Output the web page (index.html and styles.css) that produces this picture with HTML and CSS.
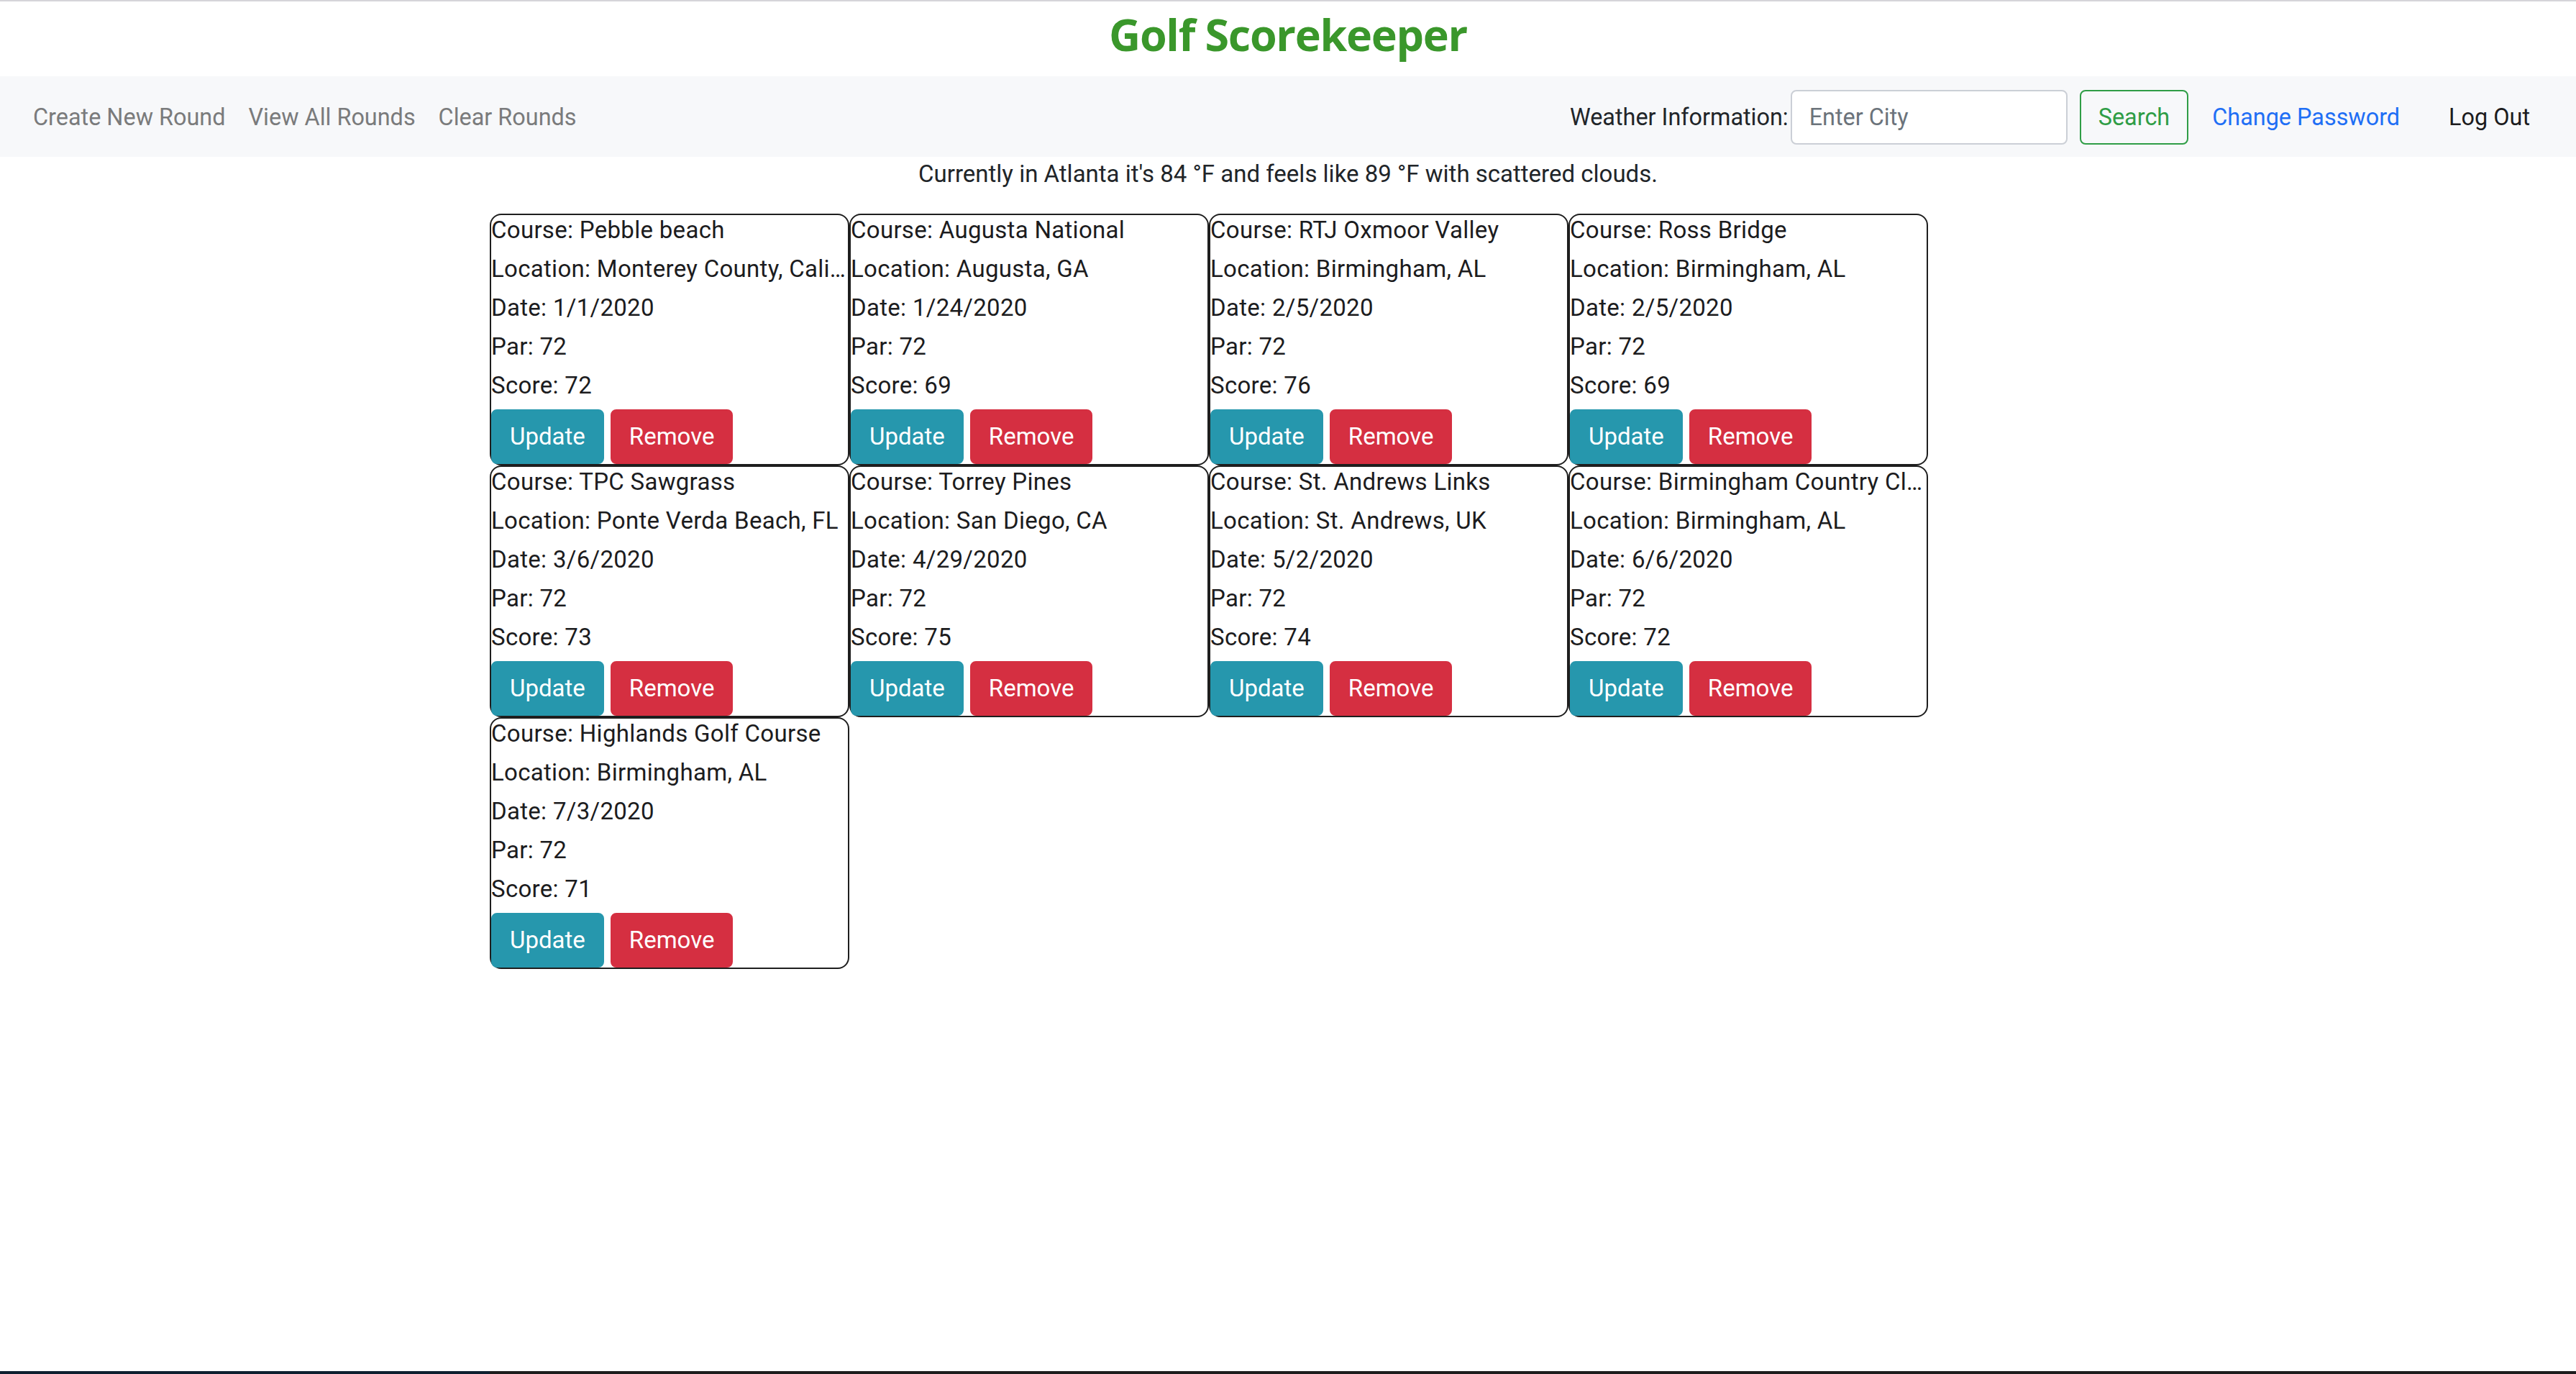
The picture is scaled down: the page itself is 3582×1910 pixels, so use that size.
FILE: index.html
```html
<!DOCTYPE html>
<html lang="en">
<head>
<meta charset="utf-8">
<title>Golf Scorekeeper</title>
<link rel="stylesheet" href="styles.css">
</head>
<body>
<div class="top-edge"></div>
<h2 class="title">Golf Scorekeeper</h2>
<nav class="navbar">
  <div class="nav-left">
    <a class="nav-link" href="#">Create New Round</a>
    <a class="nav-link" href="#">View All Rounds</a>
    <a class="nav-link" href="#">Clear Rounds</a>
  </div>
  <div class="nav-right">
    <form class="weather-form">
      <label class="weather-label">Weather Information:</label>
      <input class="city-input" type="text" placeholder="Enter City">
      <button class="btn btn-search" type="button">Search</button>
    </form>
    <a class="nav-link link-blue" href="#">Change Password</a>
    <a class="nav-link link-dark logout" href="#">Log Out</a>
  </div>
</nav>
<p class="weather">Currently in Atlanta it's 84 °F and feels like 89 °F with scattered clouds.</p>
<main class="rounds">
  <div class="card">
    <div class="line">Course: Pebble beach</div>
    <div class="line">Location: Monterey County, California</div>
    <div class="line">Date: 1/1/2020</div>
    <div class="line">Par: 72</div>
    <div class="line">Score: 72</div>
    <div class="actions"><button class="btn btn-update">Update</button><button class="btn btn-remove">Remove</button></div>
  </div>
  <div class="card">
    <div class="line">Course: Augusta National</div>
    <div class="line">Location: Augusta, GA</div>
    <div class="line">Date: 1/24/2020</div>
    <div class="line">Par: 72</div>
    <div class="line">Score: 69</div>
    <div class="actions"><button class="btn btn-update">Update</button><button class="btn btn-remove">Remove</button></div>
  </div>
  <div class="card">
    <div class="line">Course: RTJ Oxmoor Valley</div>
    <div class="line">Location: Birmingham, AL</div>
    <div class="line">Date: 2/5/2020</div>
    <div class="line">Par: 72</div>
    <div class="line">Score: 76</div>
    <div class="actions"><button class="btn btn-update">Update</button><button class="btn btn-remove">Remove</button></div>
  </div>
  <div class="card">
    <div class="line">Course: Ross Bridge</div>
    <div class="line">Location: Birmingham, AL</div>
    <div class="line">Date: 2/5/2020</div>
    <div class="line">Par: 72</div>
    <div class="line">Score: 69</div>
    <div class="actions"><button class="btn btn-update">Update</button><button class="btn btn-remove">Remove</button></div>
  </div>
  <div class="card">
    <div class="line">Course: TPC Sawgrass</div>
    <div class="line">Location: Ponte Verda Beach, FL</div>
    <div class="line">Date: 3/6/2020</div>
    <div class="line">Par: 72</div>
    <div class="line">Score: 73</div>
    <div class="actions"><button class="btn btn-update">Update</button><button class="btn btn-remove">Remove</button></div>
  </div>
  <div class="card">
    <div class="line">Course: Torrey Pines</div>
    <div class="line">Location: San Diego, CA</div>
    <div class="line">Date: 4/29/2020</div>
    <div class="line">Par: 72</div>
    <div class="line">Score: 75</div>
    <div class="actions"><button class="btn btn-update">Update</button><button class="btn btn-remove">Remove</button></div>
  </div>
  <div class="card">
    <div class="line">Course: St. Andrews Links</div>
    <div class="line">Location: St. Andrews, UK</div>
    <div class="line">Date: 5/2/2020</div>
    <div class="line">Par: 72</div>
    <div class="line">Score: 74</div>
    <div class="actions"><button class="btn btn-update">Update</button><button class="btn btn-remove">Remove</button></div>
  </div>
  <div class="card">
    <div class="line">Course: Birmingham Country Club</div>
    <div class="line">Location: Birmingham, AL</div>
    <div class="line">Date: 6/6/2020</div>
    <div class="line">Par: 72</div>
    <div class="line">Score: 72</div>
    <div class="actions"><button class="btn btn-update">Update</button><button class="btn btn-remove">Remove</button></div>
  </div>
  <div class="card">
    <div class="line">Course: Highlands Golf Course</div>
    <div class="line">Location: Birmingham, AL</div>
    <div class="line">Date: 7/3/2020</div>
    <div class="line">Par: 72</div>
    <div class="line">Score: 71</div>
    <div class="actions"><button class="btn btn-update">Update</button><button class="btn btn-remove">Remove</button></div>
  </div>
</main>
<div class="bottom-edge"><span class="edge-left"></span><span class="edge-right"></span></div>
</body>
</html>
```
FILE: styles.css
```css
* { box-sizing: border-box; }

html, body {
  margin: 0;
  padding: 0;
}

body {
  min-height: 100vh;
  display: flex;
  flex-direction: column;
  background: #ffffff;
  color: #212529;
  font-family: Roboto, "Liberation Sans", Arial, sans-serif;
  font-size: 33px;
  line-height: 48px;
}

.top-edge {
  height: 2px;
  background: #d5d4d9;
  flex: none;
}

.title {
  margin: 7px 0 20px;
  font-family: "Open Sans", "Noto Sans", sans-serif;
  font-weight: 700;
  font-size: 61px;
  letter-spacing: -1.3px;
  line-height: 77px;
  text-align: center;
  color: #3a972b;
}

.navbar {
  display: flex;
  justify-content: space-between;
  align-items: center;
  height: 112px;
  padding: 2px 48px 0 30px;
  background: #f7f8fa;
  font-size: 32.4px;
  flex: none;
}

.nav-left, .nav-right {
  display: flex;
  align-items: center;
}

.nav-link {
  padding: 16px 16px;
  color: #7a7b7c;
  text-decoration: none;
}

.weather-form {
  display: flex;
  align-items: center;
  margin-right: 17px;
}

.weather-label {
  color: #212529;
  margin-right: 3px;
}

.city-input {
  width: 385px;
  height: 76px;
  margin-right: 17px;
  padding: 0 24px;
  border: 2px solid #cbcfd6;
  border-radius: 8px;
  background: #ffffff;
  font-family: inherit;
  font-size: 32.4px;
  color: #495057;
  outline: none;
}

.city-input::placeholder {
  color: #6b737b;
}

.btn {
  display: inline-block;
  padding: 12px 24px;
  border: 2px solid transparent;
  border-radius: 8px;
  font-family: inherit;
  font-size: 33px;
  line-height: 48px;
  cursor: pointer;
  background: transparent;
}

.btn-search {
  font-size: 32.4px;
  border-color: #2f9d46;
  color: #2f9d46;
}

.link-blue {
  color: #1f6ff5;
}

.link-dark {
  color: #1c1c1e;
}

.logout {
  margin-left: 36px;
}

.weather {
  margin: 0 0 31px;
  text-align: center;
  line-height: 48px;
  flex: none;
}

.rounds {
  width: 2220px;
  margin: 0 auto;
  display: flex;
  flex-wrap: wrap;
  align-content: flex-start;
  flex: none;
}

.card {
  width: 500px;
  height: 350px;
  border: 2px solid #1e1e1e;
  border-radius: 16px;
  display: flex;
  flex-direction: column;
}

.line {
  line-height: 42px;
  margin-bottom: 12px;
  letter-spacing: 0.3px;
  white-space: nowrap;
  overflow: hidden;
  text-overflow: ellipsis;
  color: #1c1c1e;
}

.actions {
  display: flex;
  gap: 9px;
}

.btn-update {
  background: #2697ad;
  border-color: #2697ad;
  color: #ffffff;
}

.btn-remove {
  background: #d52f41;
  border-color: #d52f41;
  color: #ffffff;
}

.bottom-edge {
  margin-top: auto;
  height: 4px;
  display: flex;
  flex: none;
}

.edge-left {
  width: 681px;
  background: #0e2030;
}

.edge-right {
  flex: 1;
  background: #1d1d1d;
}
```
